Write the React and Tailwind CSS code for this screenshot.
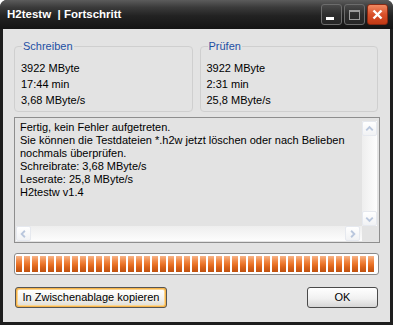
import React from 'react';

const font = { fontFamily: '"Liberation Sans", Arial, sans-serif' };

const GroupBox = ({ title, lines }) => (
  <fieldset className="flex-1 h-[72px] border border-[#cfcfcf] rounded-[4px] px-[6px] pt-[5px] m-0 min-w-0">
    <legend className="px-[1px] ml-[1px] text-[#1d4fa3] leading-[13px]">{title}</legend>
    <div className="mt-[2px] flex flex-col">
      {lines.map((l) => (
        <div key={l} className="h-[16px] leading-[16px]">{l}</div>
      ))}
    </div>
  </fieldset>
);

const Arrow = ({ dir }) => {
  const d = {
    up: 'M3.5 8.5 L7 5 L10.5 8.5',
    down: 'M3.5 5.5 L7 9 L10.5 5.5',
    left: 'M8.5 3.5 L5 7 L8.5 10.5',
    right: 'M5.5 3.5 L9 7 L5.5 10.5',
  }[dir];
  return (
    <div className="w-[15px] h-[15px] flex items-center justify-center rounded-[2px] border border-[#e6e9ef] bg-[linear-gradient(to_bottom,#ffffff,#f1f2f4)]">
      <svg width="14" height="14" viewBox="0 0 14 14">
        <path d={d} fill="none" stroke="#bac7dd" strokeWidth="2" />
      </svg>
    </div>
  );
};

const TitleButton = ({ children, close }) => (
  <div
    className={`w-[21px] h-[21px] rounded-[3px] border flex items-center justify-center ${
      close
        ? 'border-[#8a2a14] bg-[linear-gradient(to_bottom,#f08a62,#d9502a_50%,#c23a15)]'
        : 'border-[#6c6c6c] bg-[linear-gradient(to_bottom,#4a4a4a,#2e2e2e_50%,#262626)]'
    }`}
  >
    {children}
  </div>
);

export default function App() {
  const segments = Array.from({ length: 46 });
  return (
    <div className="w-[393px] h-[325px] bg-white text-[11px] text-black" style={font}>
      <div className="w-full h-full flex flex-col rounded-t-[7px] overflow-hidden bg-[#1e1e1e]">
        {/* title bar */}
        <div className="h-[29px] shrink-0 flex items-center pl-[7px] pr-[5px] bg-[linear-gradient(to_bottom,#5c5c5c,#3b3b3b_25%,#222_55%,#141414)]">
          <div className="flex-1 text-white font-bold text-[11.5px] pt-[1px]">
            H2testw&nbsp; | Fortschritt
          </div>
          <div className="flex gap-[2px] items-center">
            <TitleButton>
              <div className="w-[8px] h-[3px] bg-white mt-[8px] -ml-[3px]" />
            </TitleButton>
            <TitleButton>
              <div className="w-[11px] h-[10px] border border-[#9c9c9c] border-t-[2px]" />
            </TitleButton>
            <TitleButton close>
              <svg width="13" height="13" viewBox="0 0 13 13">
                <path d="M2.5 2.5 L10.5 10.5 M10.5 2.5 L2.5 10.5" stroke="white" strokeWidth="2.4" />
              </svg>
            </TitleButton>
          </div>
        </div>

        {/* client area */}
        <div className="flex-1 flex flex-col mx-[3px] mb-[3px] bg-[#e3e3e3] pl-[11px] pr-[10px] pt-[11px]">
          <div className="flex gap-[7px] pr-[2px]">
            <GroupBox title="Schreiben" lines={['3922 MByte', '17:44 min', '3,68 MByte/s']} />
            <GroupBox title="Prüfen" lines={['3922 MByte', '2:31 min', '25,8 MByte/s']} />
          </div>

          {/* text box */}
          <div className="mt-[5px] h-[126px] border border-[#8e8e8e] p-px pr-[2px] flex flex-col">
            <div className="flex-1 flex min-h-0">
              <div className="flex-1 pl-[4px] pt-[2px] leading-[13px] whitespace-nowrap overflow-hidden">
                <div>Fertig, kein Fehler aufgetreten.</div>
                <div>Sie können die Testdateien *.h2w jetzt löschen oder nach Belieben</div>
                <div>nochmals überprüfen.</div>
                <div>Schreibrate: 3,68 MByte/s</div>
                <div>Leserate: 25,8 MByte/s</div>
                <div>H2testw v1.4</div>
              </div>
              <div className="w-[15px] flex flex-col justify-between bg-[linear-gradient(to_right,#eeeeee,#fdfdfd)] mt-[2px]">
                <Arrow dir="up" />
                <Arrow dir="down" />
              </div>
            </div>
            <div className="h-[15px] flex">
              <div className="flex-1 flex justify-between bg-[linear-gradient(to_bottom,#eeeeee,#fdfdfd)]">
                <Arrow dir="left" />
                <div className="mr-[2px]">
                  <Arrow dir="right" />
                </div>
              </div>
              <div className="w-[15px] bg-[#e3e3e3]" />
            </div>
          </div>

          {/* progress bar */}
          <div className="mt-[10px] h-[22px] mr-[1px] rounded-[3px] border border-[#8a8a8a] bg-white p-[2px] pl-px">
            <div className="h-full flex gap-[2px] overflow-hidden">
              {segments.map((_, i) => (
                <div
                  key={i}
                  className="w-[6px] shrink-0 h-full bg-[linear-gradient(to_bottom,#f7b58a,#f08a48_30%,#ec7428_50%,#d9621a_70%,#c0520f)]"
                />
              ))}
            </div>
          </div>

          {/* buttons */}
          <div className="mt-[12px] flex justify-between pl-px pr-[2px]">
            <div className="w-[152px] h-[21px] rounded-[3px] border border-[#555] p-[1px] bg-[#f6b44a]">
              <div className="w-full h-full rounded-[2px] border border-[#fbd690] bg-[linear-gradient(to_bottom,#ffffff,#f3f2ee_60%,#e2e0d8)] flex items-center justify-center">
                In Zwischenablage kopieren
              </div>
            </div>
            <div className="w-[71px] h-[21px] rounded-[3px] border border-[#4a4a4a] bg-[linear-gradient(to_bottom,#ffffff,#f1f1f1_55%,#d6d6d6)] flex items-center justify-center">
              OK
            </div>
          </div>
        </div>
      </div>
    </div>
  );
}
